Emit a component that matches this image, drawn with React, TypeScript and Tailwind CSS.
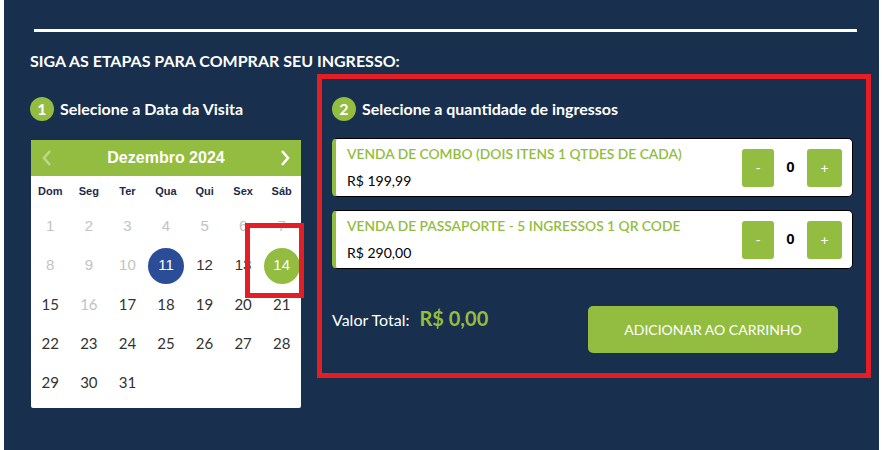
import * as React from 'react';

const lato = { fontFamily: 'Lato, "Open Sans", sans-serif' };
const arial = { fontFamily: '"Liberation Sans", Arial, sans-serif' };

const weekDays = ['Dom', 'Seg', 'Ter', 'Qua', 'Qui', 'Sex', 'Sáb'];
const disabledDays = [1, 2, 3, 4, 5, 6, 7, 8, 9, 10, 16];

const products = [
  { id: 1, name: 'VENDA DE COMBO (DOIS ITENS 1 QTDES DE CADA)', price: 'R$ 199,99' },
  { id: 2, name: 'VENDA DE PASSAPORTE - 5 INGRESSOS 1 QR CODE', price: 'R$ 290,00' },
];

function StepTitle({ n, label }: { n: number; label: string }) {
  return (
    <div className="flex items-center gap-[6px] h-[24px]">
      <span className="w-[24px] h-[24px] rounded-full bg-[#93bd40] text-white flex items-center justify-center text-[16px] font-bold">
        {n}
      </span>
      <span className="text-white text-[16px] font-bold">{label}</span>
    </div>
  );
}

function Chevron({ dir, className }: { dir: 'left' | 'right'; className?: string }) {
  return (
    <svg width="12" height="16" viewBox="0 0 12 16" className={className}>
      <polyline
        points={dir === 'left' ? '9,1 3,8 9,15' : '3,1 9,8 3,15'}
        fill="none"
        stroke="currentColor"
        strokeWidth="2.6"
      />
    </svg>
  );
}

function Calendar() {
  const days = Array.from({ length: 31 }, (_, i) => i + 1);
  return (
    <div className="relative ml-[1px] w-[270px] bg-white rounded-b-[2px] pb-[6px]">
      <div className="h-[36px] bg-[#93bd40] flex items-center justify-between px-[10px]">
        <Chevron dir="left" className="text-white/40" />
        <span className="text-white text-[16px] font-bold" style={arial}>
          Dezembro 2024
        </span>
        <Chevron dir="right" className="text-white" />
      </div>
      <div className="grid grid-cols-7">
        {weekDays.map((d) => (
          <div
            key={d}
            className="h-[31px] flex items-center justify-center text-[11px] font-bold text-[#1c2a4a]"
            style={arial}
          >
            {d}
          </div>
        ))}
        {days.map((d) => {
          const disabled = disabledDays.includes(d);
          return (
            <div key={d} className="h-[39px] flex items-center justify-center">
              {d === 11 || d === 14 ? (
                <span
                  className={`w-[36px] h-[36px] rounded-full flex items-center justify-center text-white text-[15px] ${
                    d === 11 ? 'bg-[#2b4c96]' : 'bg-[#93bd40]'
                  }`}
                  style={arial}
                >
                  {d}
                </span>
              ) : (
                <span
                  className={`text-[15px] ${disabled ? 'text-[#c3c3c3]' : 'text-[#333333]'}`}
                  style={d < 15 ? arial : lato}
                >
                  {d}
                </span>
              )}
            </div>
          );
        })}
      </div>
      {/* highlight around selected date */}
      <div className="absolute left-[214px] top-[83px] w-[59px] h-[75px] border-[5px] border-[#e31e24]" />
    </div>
  );
}

function ProductCard({ name, price }: { name: string; price: string }) {
  return (
    <div className="flex items-center h-[59px] w-[521px] bg-white rounded-[5px] border border-black border-l-[4px] border-l-[#93bd40] pl-[11px] pr-[10px]">
      <div className="flex-1 flex flex-col justify-between h-full pt-[5px] pb-[5px]">
        <span className="text-[13.8px] font-semibold text-[#93bd40]">{name}</span>
        <span className="text-[14px] text-black">{price}</span>
      </div>
      <div className="flex items-center">
        <button className="w-[32px] h-[38px] rounded-[3px] bg-[#93bd40] text-white text-[14px]">
          -
        </button>
        <span className="w-[33px] text-center text-[15px] font-bold text-black" style={arial}>
          0
        </span>
        <button className="w-[35px] h-[38px] rounded-[3px] bg-[#93bd40] text-white text-[14px]">
          +
        </button>
      </div>
    </div>
  );
}

export default function App() {
  return (
    <div className="w-[882px] h-[450px] bg-white" style={lato}>
      <div className="ml-[4px] w-[875px] h-[450px] bg-[#182f4d] pt-[29px]">
        <div className="ml-[30px] w-[823px] h-[3px] bg-white" />
        <h2 className="pl-[26px] mt-[19px] text-white text-[16px] font-bold leading-[20px]">
          SIGA AS ETAPAS PARA COMPRAR SEU INGRESSO:
        </h2>
        <div className="flex mt-[3px] pl-[26px]">
          <div className="w-[287px] pt-[23px]">
            <StepTitle n={1} label="Selecione a Data da Visita" />
            <div className="mt-[19px]">
              <Calendar />
            </div>
          </div>
          <div className="w-[554px] h-[304px] border-[5px] border-[#e31e24] pl-[10px] pr-[13px] pt-[18px]">
            <StepTitle n={2} label="Selecione a quantidade de ingressos" />
            <div className="flex flex-col gap-[13px] mt-[17px]">
              {products.map((p) => (
                <ProductCard key={p.id} name={p.name} price={p.price} />
              ))}
            </div>
            <div className="flex items-center mt-[37px]">
              <div className="flex items-baseline gap-[10px] w-[256px] -mt-[23px]">
                <span className="text-white text-[16px]">Valor Total:</span>
                <span className="text-[#93bd40] text-[20px] font-bold">R$ 0,00</span>
              </div>
              <button className="w-[250px] h-[47px] rounded-[5px] bg-[#93bd40] text-white text-[14px]">
                ADICIONAR AO CARRINHO
              </button>
            </div>
          </div>
        </div>
      </div>
    </div>
  );
}
